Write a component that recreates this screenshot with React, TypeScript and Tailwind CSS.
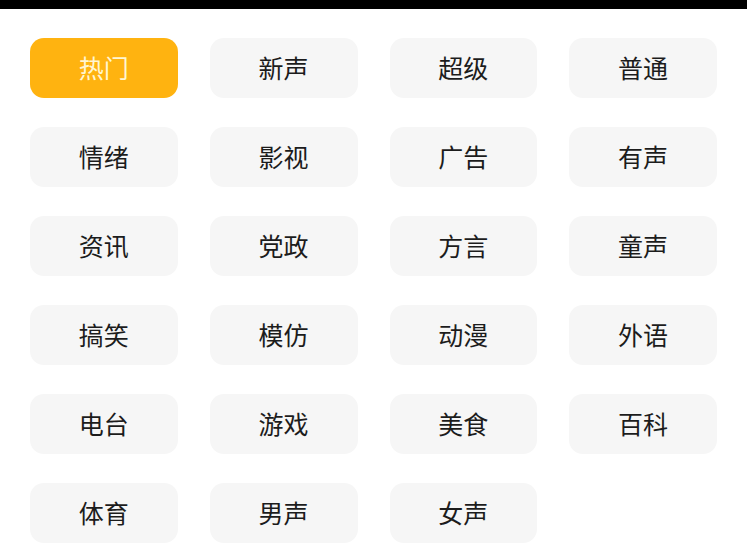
const tags = [
  '热门', '新声', '超级', '普通',
  '情绪', '影视', '广告', '有声',
  '资讯', '党政', '方言', '童声',
  '搞笑', '模仿', '动漫', '外语',
  '电台', '游戏', '美食', '百科',
  '体育', '男声', '女声',
]

export default function App() {
  return (
    <div
      className="min-h-[559px] w-full bg-white"
      style={{ fontFamily: '"Noto Sans CJK SC", "Noto Sans", sans-serif' }}
    >
      <div className="h-[9px] bg-black" />
      <div className="grid grid-cols-4 gap-x-[32px] gap-y-[29px] px-[30px] pt-[29px]">
        {tags.map((t, i) => (
          <button
            key={t}
            className={
              i === 0
                ? 'flex h-[60px] items-center justify-center rounded-[14px] bg-[#ffb310] text-[25px] text-[#fff6d2]'
                : 'flex h-[60px] items-center justify-center rounded-[14px] bg-[#f6f6f6] text-[25px] text-[#1c1c1c]'
            }
          >
            {t}
          </button>
        ))}
      </div>
    </div>
  )
}
